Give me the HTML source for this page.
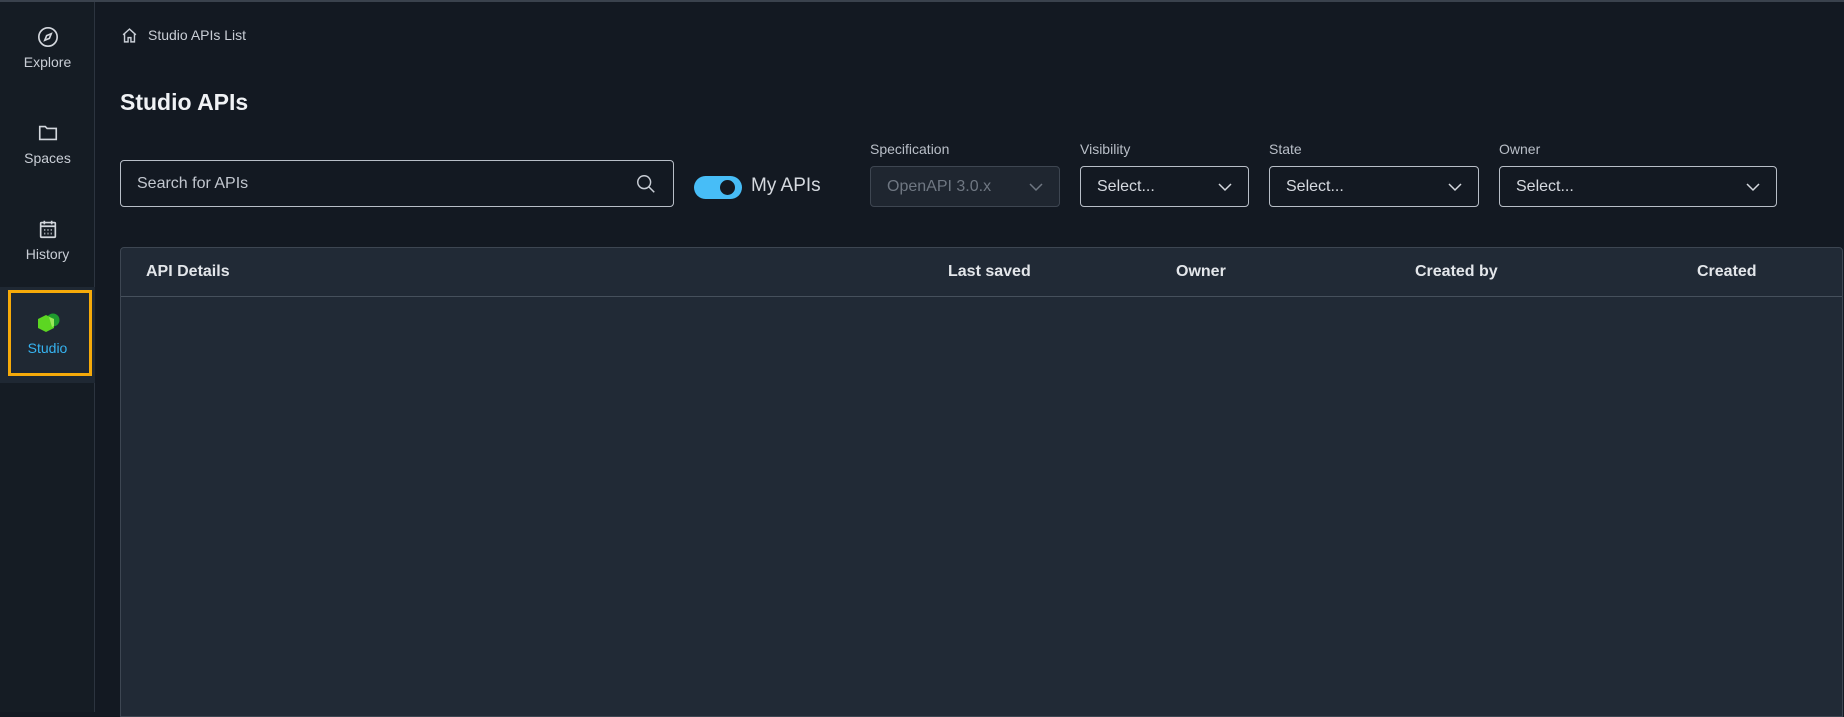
<!DOCTYPE html>
<html><head><meta charset="utf-8"><style>
*{box-sizing:border-box;margin:0;padding:0}
body{width:1844px;height:712px;overflow:hidden;background:#131922;font-family:"Liberation Sans",sans-serif;color:#e6e9ee;position:relative}
.topline{position:absolute;left:0;top:0;width:1844px;height:2px;background:#3a424d}
.side{position:absolute;left:0;top:2px;width:95px;height:710px;background:#151c24;border-right:1px solid #2c343f}
.nav{position:absolute;left:0;width:95px;text-align:center;font-size:14px;color:#c9ced6}
.nav svg{display:block;margin:0 auto 6px}
.studiobg{position:absolute;left:0;top:287px;width:95px;height:96px;background:#1f2833}
.studiobox{position:absolute;left:8px;top:290px;width:84px;height:86px;border:3px solid #f5aa0a}
.abs{position:absolute}
.field{position:absolute;border:1px solid #b8bec7;border-radius:4px;height:41px;font-size:16px;color:#d5d9df;padding:0 16px;display:flex;align-items:center;justify-content:space-between}
.lbl{position:absolute;font-size:14px;color:#b9bfc8;top:141px}
.table{position:absolute;left:120px;top:247px;width:1723px;height:470px;background:#212a36;border:1px solid #3d4652;border-radius:4px 4px 0 0}
.thead{height:49px;border-bottom:1px solid #46505c;position:relative}
.th{position:absolute;top:15px;font-size:16px;font-weight:bold;color:#e3e6ea}
</style></head><body>
<div class="topline"></div>
<div class="side">
  <div class="nav" style="top:24px">
    <svg width="22" height="22" viewBox="0 0 24 24" fill="none" stroke="#d3d7dd" stroke-width="1.8"><circle cx="12" cy="12" r="10"/><path d="M15.5 8.5l-2 5-5 2 2-5z"/></svg>Explore</div>
  <div class="nav" style="top:120px">
    <svg width="22" height="22" viewBox="0 0 24 24" fill="none" stroke="#d3d7dd" stroke-width="1.8"><path d="M3 5h6l2 2h10v12H3z"/></svg>Spaces</div>
  <div class="nav" style="top:216px">
    <svg width="22" height="22" viewBox="0 0 24 24" fill="none" stroke="#d3d7dd" stroke-width="1.8"><rect x="4" y="5" width="16" height="16" rx="1"/><path d="M4 9h16M8 3v4M16 3v4"/><path d="M8 13h1M11.5 13h1M15 13h1M8 17h1M11.5 17h1M15 17h1" stroke-width="2"/></svg>History</div>
</div>
<div class="studiobg"></div>
<div class="studiobox"></div>
<svg class="abs" style="left:33px;top:312px" width="28" height="24" viewBox="0 0 28 24"><circle cx="20" cy="8" r="6.5" fill="#1f9b2e"/><path d="M13 3l8 4v9l-8 4-8-4V7z" fill="#5cd622"/><path d="M16 5l5 2v7l-2 1z" fill="#9be85a"/></svg>
<div class="abs" style="left:0;top:340px;width:95px;text-align:center;font-size:14px;color:#36b3f0">Studio</div>

<svg class="abs" style="left:121px;top:27px" width="17" height="17" viewBox="0 0 24 24" fill="none" stroke="#c9ced6" stroke-width="2"><path d="M3 11l9-8 9 8M5 9v12h5v-6h4v6h5V9"/></svg>
<div class="abs" style="left:148px;top:27px;font-size:14px;color:#c9ced6">Studio APIs List</div>
<div class="abs" style="left:120px;top:89px;font-size:23px;font-weight:bold;color:#f0f2f5">Studio APIs</div>

<div class="field" style="left:120px;top:160px;width:554px;height:47px;color:#c2c7cf">Search for APIs
<svg width="22" height="22" viewBox="0 0 24 24" fill="none" stroke="#c9ced6" stroke-width="1.6"><circle cx="10" cy="10" r="7"/><path d="M15 15l6 6"/></svg></div>

<div class="abs" style="left:694px;top:176px;width:48px;height:23px;border-radius:12px;background:#47bdf7"></div>
<div class="abs" style="left:720px;top:180px;width:15px;height:15px;border-radius:50%;background:#131922"></div>
<div class="abs" style="left:751px;top:175px;font-size:19px;color:#d5d9df">My APIs</div>

<div class="lbl" style="left:870px">Specification</div>
<div class="field" style="left:870px;top:166px;width:190px;background:#1f2630;border-color:#3e4651;color:#6f7782">OpenAPI 3.0.x<svg width="14" height="10" viewBox="0 0 14 10" fill="none" stroke="#6f7782" stroke-width="1.5"><path d="M1 2l6 6 6-6"/></svg></div>
<div class="lbl" style="left:1080px">Visibility</div>
<div class="field" style="left:1080px;top:166px;width:169px">Select...<svg width="14" height="10" viewBox="0 0 14 10" fill="none" stroke="#d5d9df" stroke-width="1.5"><path d="M1 2l6 6 6-6"/></svg></div>
<div class="lbl" style="left:1269px">State</div>
<div class="field" style="left:1269px;top:166px;width:210px">Select...<svg width="14" height="10" viewBox="0 0 14 10" fill="none" stroke="#d5d9df" stroke-width="1.5"><path d="M1 2l6 6 6-6"/></svg></div>
<div class="lbl" style="left:1499px">Owner</div>
<div class="field" style="left:1499px;top:166px;width:278px">Select...<svg width="14" height="10" viewBox="0 0 14 10" fill="none" stroke="#d5d9df" stroke-width="1.5"><path d="M1 2l6 6 6-6"/></svg></div>

<div class="table"><div class="thead">
<div class="th" style="left:25px">API Details</div>
<div class="th" style="left:827px">Last saved</div>
<div class="th" style="left:1055px">Owner</div>
<div class="th" style="left:1294px">Created by</div>
<div class="th" style="left:1576px">Created</div>
</div></div>
</body></html>
